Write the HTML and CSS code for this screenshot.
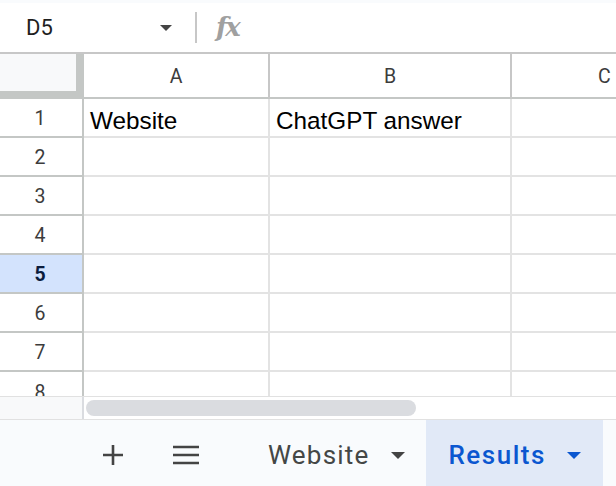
FILE: index.html
```html
<!DOCTYPE html>
<html>
<head>
<meta charset="utf-8">
<link rel="stylesheet" href="styles.css">
</head>
<body>
<div class="app">
  <div class="topstrip"></div>
  <div class="formulabar">
    <div class="namebox">D5</div>
    <svg class="nb-arrow" width="12" height="6" viewBox="0 0 12 6"><path d="M0 0h12L6 6z" fill="#444"/></svg>
    <div class="fsep"></div>
    <div class="fx">fx</div>
  </div>
  <div class="grid">
    <div class="row hdr">
      <div class="corner"><div class="corner-in"></div></div>
      <div class="ch ca">A</div>
      <div class="ch cb">B</div>
      <div class="ch cc">C</div>
    </div>
    <div class="row">
      <div class="rh">1</div>
      <div class="c ca">Website</div>
      <div class="c cb">ChatGPT answer</div>
      <div class="c cc"></div>
    </div>
    <div class="row"><div class="rh">2</div><div class="c ca"></div><div class="c cb"></div><div class="c cc"></div></div>
    <div class="row"><div class="rh">3</div><div class="c ca"></div><div class="c cb"></div><div class="c cc"></div></div>
    <div class="row"><div class="rh">4</div><div class="c ca"></div><div class="c cb"></div><div class="c cc"></div></div>
    <div class="row"><div class="rh sel">5</div><div class="c ca"></div><div class="c cb"></div><div class="c cc"></div></div>
    <div class="row"><div class="rh">6</div><div class="c ca"></div><div class="c cb"></div><div class="c cc"></div></div>
    <div class="row"><div class="rh">7</div><div class="c ca"></div><div class="c cb"></div><div class="c cc"></div></div>
    <div class="row"><div class="rh last">8</div><div class="c ca"></div><div class="c cb"></div><div class="c cc"></div></div>
  </div>
  <div class="scrollrow">
    <div class="scroll-left"></div>
    <div class="scroll-track"><div class="thumb"></div></div>
  </div>
  <div class="tabbar">
    <div class="tb-btn plus">
      <svg width="22" height="22" viewBox="0 0 22 22"><path d="M11 1v20M1 11h20" stroke="#444" stroke-width="2.6"/></svg>
    </div>
    <div class="tb-btn menu">
      <svg width="28" height="20" viewBox="0 0 28 20"><path d="M1 2h26M1 10h26M1 18h26" stroke="#444" stroke-width="2.6"/></svg>
    </div>
    <div class="tab">
      <span class="tab-name">Website</span>
      <svg width="14" height="7" viewBox="0 0 14 7"><path d="M0 0h14L7 7z" fill="#444"/></svg>
    </div>
    <div class="tab active">
      <span class="tab-name">Results</span>
      <svg width="14" height="7" viewBox="0 0 14 7"><path d="M0 0h14L7 7z" fill="#0b57d0"/></svg>
    </div>
  </div>
</div>
</body>
</html>
```

FILE: styles.css
```css
* { box-sizing: border-box; }
html, body { margin: 0; padding: 0; }
body { width: 616px; height: 486px; overflow: hidden; background: #fff; font-family: Roboto, "Liberation Sans", sans-serif; }
.app { display: flex; flex-direction: column; height: 486px; }
.topstrip { height: 3px; background: #f9fbfd; }
.formulabar { height: 51px; display: flex; align-items: center; border-bottom: 2px solid #c7c7c7; background: #fff; }
.namebox { width: 160px; padding-left: 26px; font-size: 22px; color: #1f1f1f; line-height: 1; }
.nb-arrow { margin-top: 1px; }
.fsep { width: 2px; height: 31px; background: #c7c7c7; margin-left: 23px; }
.fx { margin-left: 19px; font-family: "DejaVu Serif", serif; font-style: italic; font-weight: bold; font-size: 26px; color: #a0a0a0; letter-spacing: -2px; line-height: 1; margin-top: -2px; }
.grid { height: 342px; overflow: hidden; display: flex; flex-direction: column; }
.row { display: flex; height: 39px; flex: none; }
.row.hdr { height: 45px; }
.corner { width: 84px; background: #c4c7c5; padding: 0 8px 8px 0; flex: none; }
.corner-in { background: #f8f9fa; height: 100%; }
.ch { display: flex; align-items: center; justify-content: center; font-size: 19.5px; color: #3c3c3c; border-right: 2px solid #c7c7c7; border-bottom: 2px solid #c4c7c5; flex: none; padding-top: 1px; }
.ca { width: 186px; }
.cb { width: 242px; }
.cc { flex: 1; min-width: 0; }
.ch.cc { justify-content: flex-start; padding-left: 86px; border-right: none; }
.rh { width: 84px; flex: none; display: flex; align-items: center; justify-content: center; font-size: 19.5px; color: #3c3c3c; border-right: 2px solid #c4c7c5; border-bottom: 2px solid #c4c7c5; background: #fff; padding-right: 2px; padding-top: 2px; }
.rh.sel { background: #d3e3fd; color: #0b1c3d; font-weight: bold; }
.rh.last { align-items: flex-start; padding-top: 9px; }
.c { border-right: 2px solid #e3e3e3; border-bottom: 2px solid #e3e3e3; font-family: "Liberation Sans", Arial, sans-serif; font-size: 24.3px; color: #000; display: flex; align-items: center; padding-left: 6px; padding-top: 6px; flex: none; white-space: nowrap; }
.c.cc { flex: 1; border-right: none; }
.scrollrow { height: 24px; display: flex; border-top: 1px solid #e1e1e1; border-bottom: 1px solid #e1e1e1; }
.scroll-left { width: 84px; background: #f8f9fa; border-right: 2px solid #dadce0; }
.scroll-track { flex: 1; padding: 3px 0 0 2px; }
.thumb { width: 330px; height: 16px; border-radius: 8px; background: #dadce0; }
.tabbar { flex: 1; background: #f9fbfd; display: flex; align-items: stretch; }
.tb-btn { display: flex; align-items: center; justify-content: center; padding-top: 3px; }
.plus { width: 22px; margin-left: 102px; }
.menu { width: 28px; margin-left: 48px; }
.tab { display: flex; align-items: center; gap: 21px; font-size: 26px; color: #444746; letter-spacing: 1.2px; padding-top: 3px; }
.tab:not(.active) { margin-left: 68px; }
.tab.active { margin-left: 21px; background: #e1e9f7; width: 177px; padding-left: 23px; color: #0b57d0; font-weight: 500; letter-spacing: 1.5px; }
.tab svg { margin-top: 1px; }
```
